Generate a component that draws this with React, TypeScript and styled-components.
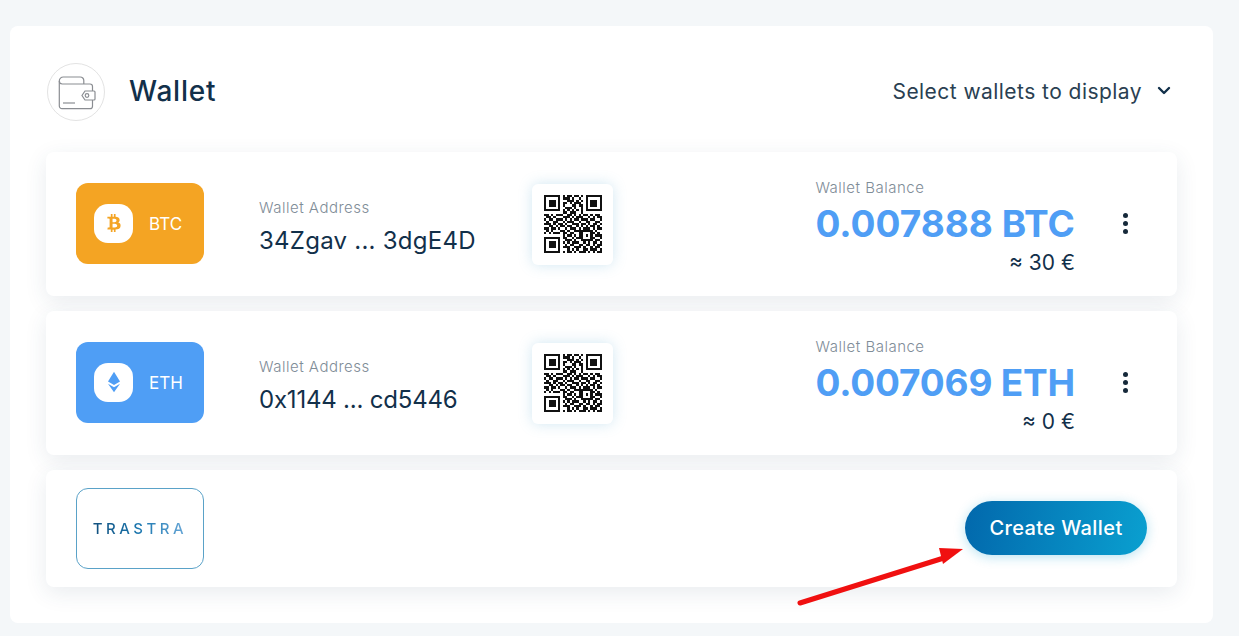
import React from 'react';
import styled, { createGlobalStyle } from 'styled-components';
import { FaBtc } from 'react-icons/fa';

const GlobalStyle = createGlobalStyle`
  html, body {
    margin: 0;
    padding: 0;
    background: #f4f7f9;
    font-family: Inter, "Open Sans", sans-serif;
    color: #12304a;
  }
`;

const Page = styled.div`
  position: relative;
  width: 1239px;
  height: 636px;
  box-sizing: border-box;
  padding: 26px 26px 13px 10px;
  overflow: hidden;
`;

const Panel = styled.main`
  height: 100%;
  box-sizing: border-box;
  padding: 37px 36px 0;
  background: #fff;
  border-radius: 8px;
`;

const Header = styled.header`
  display: flex;
  align-items: center;
  height: 58px;
  padding-left: 1px;
  margin-bottom: 31px;
`;

const IconCircle = styled.div`
  display: flex;
  align-items: center;
  justify-content: center;
  width: 58px;
  height: 58px;
  box-sizing: border-box;
  padding: 2px 0 0 2px;
  border: 1px solid #e3e3e3;
  border-radius: 50%;
`;

const Title = styled.h1`
  margin: 0 0 2px 24px;
  font-size: 28px;
  font-weight: 500;
  line-height: 1;
  letter-spacing: 0.8px;
  color: #12304a;
`;

const WalletSelect = styled.button`
  display: flex;
  align-items: center;
  gap: 15px;
  margin-left: auto;
  margin-right: 6px;
  margin-bottom: 2px;
  padding: 0;
  border: 0;
  background: none;
  font: 400 21px Inter, sans-serif;
  letter-spacing: 0.45px;
  color: #2a3f52;
`;

const List = styled.div`
  display: flex;
  flex-direction: column;
  gap: 15px;
`;

const Card = styled.section<{ $height: number }>`
  display: flex;
  align-items: center;
  height: ${p => p.$height}px;
  box-sizing: border-box;
  padding: 0 30px;
  background: #fff;
  border-radius: 8px;
  box-shadow: 0 6px 22px rgba(40, 70, 100, 0.1);
`;

const CoinTile = styled.div<{ $color: string }>`
  display: flex;
  align-items: center;
  flex: none;
  width: 128px;
  height: 81px;
  box-sizing: border-box;
  margin-bottom: 2px;
  padding-left: 18px;
  border-radius: 12px;
  background: ${p => p.$color};
  color: #fff;
`;

const CoinBadge = styled.div<{ $color: string }>`
  display: flex;
  align-items: center;
  justify-content: center;
  width: 39px;
  height: 39px;
  margin-right: 16px;
  border-radius: 14px;
  background: #fff;
  color: ${p => p.$color};
`;

const CoinName = styled.span`
  margin-top: 2px;
  font-size: 17px;
  font-weight: 400;
`;

const Address = styled.div`
  flex: none;
  width: 273px;
  margin: 7px 0 0 55px;
`;

const FieldLabel = styled.div`
  font-size: 15px;
  line-height: 18px;
  font-weight: 300;
  letter-spacing: 0.5px;
  color: #7f8d98;
`;

const AddressValue = styled.div<{ $tracking: number }>`
  margin-top: 9px;
  font-size: 24px;
  line-height: 30px;
  letter-spacing: ${p => p.$tracking}px;
  color: #12304a;
`;

const QrTile = styled.div`
  display: flex;
  align-items: center;
  justify-content: center;
  flex: none;
  width: 81px;
  height: 81px;
  border-radius: 6px;
  background: #fff;
  box-shadow: 0 0 14px rgba(90, 170, 210, 0.28);
`;

const Balance = styled.div`
  display: flex;
  flex-direction: column;
  margin: 6px 0 0 auto;
`;

const Amount = styled.div<{ $tracking: number }>`
  margin-top: 5px;
  font-size: 37px;
  line-height: 44px;
  font-weight: 700;
  letter-spacing: ${p => p.$tracking}px;
  color: #4f9ef5;
`;

const Fiat = styled.div`
  align-self: flex-end;
  margin-top: 4px;
  font-size: 21px;
  line-height: 26px;
  color: #12304a;
`;

const MoreButton = styled.button`
  display: flex;
  flex-direction: column;
  align-items: center;
  gap: 3px;
  flex: none;
  width: 20px;
  margin: 0 12px 2px 40px;
  padding: 0;
  border: 0;
  background: none;
`;

const Dot = styled.span`
  width: 5px;
  height: 5px;
  border-radius: 50%;
  background: #16293a;
`;

const LogoTile = styled.div`
  display: flex;
  align-items: center;
  justify-content: center;
  width: 128px;
  height: 81px;
  box-sizing: border-box;
  border: 1px solid #5aa2c8;
  border-radius: 12px;
`;

const LogoText = styled.span`
  font-size: 15px;
  font-weight: 500;
  letter-spacing: 3.5px;
  background: linear-gradient(90deg, #12507e 0%, #1c78b0 50%, #6aa8d8 100%);
  -webkit-background-clip: text;
  background-clip: text;
  color: transparent;
`;

const CreateButton = styled.button`
  width: 182px;
  height: 54px;
  margin: 0 0 2px auto;
  padding: 0;
  border: 0;
  border-radius: 27px;
  background: linear-gradient(100deg, #0268ac 0%, #0aa0d0 100%);
  box-shadow: 0 2px 12px rgba(20, 160, 210, 0.3);
  font: 500 20px Inter, sans-serif;
  letter-spacing: 0.4px;
  color: #fff;
`;

const ArrowOverlay = styled.svg`
  position: absolute;
  left: 795px;
  top: 540px;
  pointer-events: none;
`;

const WalletIcon = () => (
  <svg width="38" height="34" viewBox="0 0 38 34" fill="none" stroke="#8a8d92" strokeWidth="1.2">
    <path d="M1.3 5 a4 4 0 0 1 4-4 h17 a3.5 3.5 0 0 1 3.5 3.5 v3.5" />
    <path d="M1.3 5 v25 a2.7 2.7 0 0 0 2.7 2.7 h28 a2.5 2.5 0 0 0 2.5-2.5 v-6.2" />
    <path d="M1.3 5 a3 3 0 0 0 3 3 h27.7 a2.5 2.5 0 0 1 2.5 2.5 v4.5" />
    <path d="M27 15 h9 a1 1 0 0 1 1 1 v7 a1 1 0 0 1-1 1 h-9 l-3-4.5 z" />
    <circle cx="29" cy="19.5" r="1.8" />
    <path d="M5 27 h12" />
  </svg>
);

const Chevron = () => (
  <svg width="14" height="10" viewBox="0 0 14 10" fill="none" stroke="#12304a" strokeWidth="2.4" strokeLinecap="round" strokeLinejoin="round">
    <path d="M2 2 l5 5 l5-5" />
  </svg>
);

const EthIcon = () => (
  <svg width="12" height="22" viewBox="0 0 14 24" fill="#4f9ef5">
    <path d="M7 0 L14 11.5 L7 15.5 L0 11.5 Z" />
    <path d="M0 14 L7 18 L14 14 L7 24 Z" />
  </svg>
);

const qrRows = [
  '1111111010110110101111111',
  '1000001011101001001000001',
  '1011101000111010101011101',
  '1011101011010111001011101',
  '1011101010001101101011101',
  '1000001001110100101000001',
  '1111111010101010101111111',
  '0000000011011100100000000',
  '1101011100110101011010110',
  '0110100011101011100101011',
  '1011011101010110111011001',
  '0100110010111001001100110',
  '1110101101001110110101101',
  '0011010110110010101011010',
  '1101101001011101011101011',
  '0101000110100111111110100',
  '1010111011011001100011010',
  '0000000010110101101010111',
  '1111111011001011100011001',
  '1000001001110100111110110',
  '1011101010101110010101101',
  '1011101001011001101101011',
  '1011101011100111010010110',
  '1000001000101010011011101',
  '1111111010110101110101011',
];

const QrCode = () => (
  <svg width="58" height="58" viewBox="0 0 25 25" shapeRendering="crispEdges">
    {qrRows.flatMap((row, y) =>
      row.split('').map((cell, x) =>
        cell === '1' ? <rect key={`${x}-${y}`} x={x} y={y} width="1" height="1" fill="#111" /> : null
      )
    )}
  </svg>
);

const wallets = [
  { coin: 'BTC', color: '#f4a423', address: '34Zgav ... 3dgE4D', addressTracking: 0.25, amount: '0.007888 BTC', amountTracking: 0, fiat: '≈ 30 €', icon: <FaBtc size={18} /> },
  { coin: 'ETH', color: '#4f9ef5', address: '0x1144 ... cd5446', addressTracking: -0.2, amount: '0.007069 ETH', amountTracking: -0.2, fiat: '≈ 0 €', icon: <EthIcon /> },
];

export default function App() {
  return (
    <Page>
      <GlobalStyle />
      <Panel>
        <Header>
          <IconCircle>
            <WalletIcon />
          </IconCircle>
          <Title>Wallet</Title>
          <WalletSelect>
            Select wallets to display
            <Chevron />
          </WalletSelect>
        </Header>
        <List>
          {wallets.map(w => (
            <Card key={w.coin} $height={144}>
              <CoinTile $color={w.color}>
                <CoinBadge $color={w.color}>{w.icon}</CoinBadge>
                <CoinName>{w.coin}</CoinName>
              </CoinTile>
              <Address>
                <FieldLabel>Wallet Address</FieldLabel>
                <AddressValue $tracking={w.addressTracking}>{w.address}</AddressValue>
              </Address>
              <QrTile>
                <QrCode />
              </QrTile>
              <Balance>
                <FieldLabel>Wallet Balance</FieldLabel>
                <Amount $tracking={w.amountTracking}>{w.amount}</Amount>
                <Fiat>{w.fiat}</Fiat>
              </Balance>
              <MoreButton>
                <Dot />
                <Dot />
                <Dot />
              </MoreButton>
            </Card>
          ))}
          <Card $height={117}>
            <LogoTile>
              <LogoText>TRASTRA</LogoText>
            </LogoTile>
            <CreateButton>Create Wallet</CreateButton>
          </Card>
        </List>
      </Panel>
      <ArrowOverlay width="180" height="70" viewBox="0 0 180 70">
        <path d="M5 63 L152 17" stroke="#f01010" strokeWidth="5" strokeLinecap="round" />
        <path d="M144 8 L168 9 L148 24 Z" fill="#f01010" />
      </ArrowOverlay>
    </Page>
  );
}
